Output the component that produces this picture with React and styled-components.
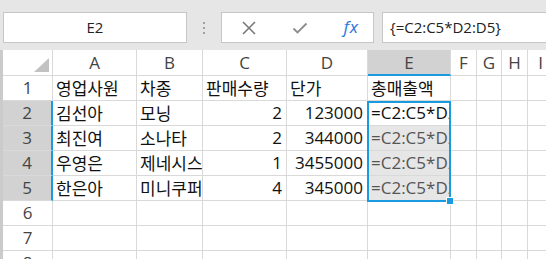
import React from "react";
import styled, { createGlobalStyle, css } from "styled-components";

const Global = createGlobalStyle`
  html, body { margin: 0; padding: 0; background: #ffffff; overflow: hidden; }
  body { font-family: "Open Sans", "Noto Sans CJK KR", sans-serif; }
`;

const BLUE = "#1a9be0";
const LINE = "#d9d9d9";

const Page = styled.div`
  width: 546px;
  height: 259px;
  overflow: hidden;
  display: flex;
  flex-direction: column;
`;

const Toolbar = styled.div`
  height: 50px;
  flex: none;
  background: #e6e6e6;
  box-sizing: border-box;
  padding: 12px 0 7px 3px;
  display: flex;
  align-items: stretch;
`;

const Box = styled.div`
  background: #ffffff;
  border: 1px solid #c6c6c6;
  box-sizing: border-box;
  display: flex;
  align-items: center;
`;

const NameBox = styled(Box)`
  width: 184px;
  flex: none;
  justify-content: center;
  font-size: 15px;
  color: #222;
  padding-bottom: 1px;
`;

const Dots = styled.div`
  width: 34px;
  flex: none;
  display: flex;
  flex-direction: column;
  align-items: center;
  justify-content: center;
  gap: 3px;
  span {
    width: 2px;
    height: 2px;
    border-radius: 1px;
    background: #888;
  }
`;

const ButtonBox = styled(Box)`
  width: 153px;
  flex: none;
  justify-content: space-between;
  padding: 0 14px 0 19px;
`;

const Fx = styled.span`
  font-family: "Noto Sans", sans-serif;
  font-style: italic;
  font-size: 17px;
  color: #2f7de1;
  letter-spacing: 1px;
  margin-top: -3px;
`;

const FormulaBox = styled(Box)`
  flex: 1;
  margin-left: 8px;
  border-right: none;
  padding-left: 7px;
  font-size: 15px;
  color: #222;
  padding-bottom: 1px;
`;

const GridWrap = styled.div`
  position: relative;
  flex: 1;
  border-left: 3px solid #cbcbcb;
`;

const Grid = styled.div`
  display: grid;
  grid-template-columns: 50px 84px 66px 84px 81px 83px 26px 25px 26px 26px;
  grid-template-rows: 26px repeat(8, 25px);
`;

const Cell = styled.div`
  box-sizing: border-box;
  border-right: 1px solid ${LINE};
  border-bottom: 1px solid ${LINE};
  font-size: 17px;
  color: #111;
  white-space: nowrap;
  overflow: hidden;
  display: flex;
  align-items: center;
  padding: 0 4px 1px 3px;
  justify-content: ${(p) => (p.$num ? "flex-end" : "flex-start")};
  ${(p) =>
    p.$dim &&
    css`
      background: #e6e6e6;
      color: #555;
    `}
`;

const HeadCell = styled.div`
  box-sizing: border-box;
  border-right: 1px solid ${LINE};
  border-bottom: 1px solid ${LINE};
  font-size: 17px;
  color: #444;
  display: flex;
  align-items: center;
  justify-content: center;
  padding-bottom: 1px;
  overflow: hidden;
  ${(p) =>
    p.$sel &&
    css`
      background: #d2d2d2;
      border-bottom: 2px solid ${BLUE};
      padding-bottom: 0;
    `}
`;

const RowHead = styled(HeadCell)`
  ${(p) =>
    p.$sel &&
    css`
      border-bottom: 1px solid ${LINE};
      border-right: 2px solid ${BLUE};
      padding-bottom: 1px;
    `}
`;

const Corner = styled.div`
  box-sizing: border-box;
  border-right: 1px solid ${LINE};
  border-bottom: 1px solid ${LINE};
  display: flex;
  align-items: flex-end;
  justify-content: flex-end;
  padding: 0 3px 3px 0;
  &::after {
    content: "";
    width: 0;
    height: 0;
    border-style: solid;
    border-width: 0 0 14px 15px;
    border-color: transparent transparent #c2c2c2 transparent;
  }
`;

const Selection = styled.div`
  position: absolute;
  left: 364px;
  top: 51px;
  width: 84px;
  height: 101px;
  box-sizing: border-box;
  border: 2px solid ${BLUE};
  pointer-events: none;
`;

const Handle = styled.div`
  position: absolute;
  right: -5px;
  bottom: -5px;
  width: 6px;
  height: 6px;
  background: ${BLUE};
  border: 1px solid #fff;
`;

const cols = ["A", "B", "C", "D", "E", "F", "G", "H", "I"];

const data = [
  ["영업사원", "차종", "판매수량", "단가", "총매출액"],
  ["김선아", "모닝", "2", "123000", "=C2:C5*D2:D5"],
  ["최진여", "소나타", "2", "344000", "=C2:C5*D2:D5"],
  ["우영은", "제네시스", "1", "3455000", "=C2:C5*D2:D5"],
  ["한은아", "미니쿠퍼", "4", "345000", "=C2:C5*D2:D5"],
  [],
  [],
  [],
];

const XIcon = () => (
  <svg width="16" height="16" viewBox="0 0 16 16">
    <path d="M2 2 L14 14 M14 2 L2 14" stroke="#7a7a7a" strokeWidth="1.6" fill="none" />
  </svg>
);

const CheckIcon = () => (
  <svg width="16" height="14" viewBox="0 0 16 14">
    <path d="M1.5 7.5 L5.5 11.5 L14.5 2.5" stroke="#8c8c8c" strokeWidth="1.8" fill="none" />
  </svg>
);

export default function App() {
  return (
    <Page>
      <Global />
      <Toolbar>
        <NameBox>E2</NameBox>
        <Dots>
          <span />
          <span />
          <span />
        </Dots>
        <ButtonBox>
          <XIcon />
          <CheckIcon />
          <Fx>fx</Fx>
        </ButtonBox>
        <FormulaBox>{"{=C2:C5*D2:D5}"}</FormulaBox>
      </Toolbar>
      <GridWrap>
        <Grid>
          <Corner />
          {cols.map((c) => (
            <HeadCell key={c} $sel={c === "E"}>
              {c}
            </HeadCell>
          ))}
          {data.map((row, r) => {
            const rowNum = r + 1;
            const sel = rowNum >= 2 && rowNum <= 5;
            return (
              <React.Fragment key={r}>
                <RowHead $sel={sel}>{rowNum}</RowHead>
                {cols.map((c, ci) => {
                  const v = row[ci] || "";
                  const num = r > 0 && (ci === 2 || ci === 3);
                  const dim = ci === 4 && rowNum >= 3 && rowNum <= 5;
                  return (
                    <Cell key={c} $num={num} $dim={dim}>
                      {v}
                    </Cell>
                  );
                })}
              </React.Fragment>
            );
          })}
        </Grid>
        <Selection>
          <Handle />
        </Selection>
      </GridWrap>
    </Page>
  );
}
